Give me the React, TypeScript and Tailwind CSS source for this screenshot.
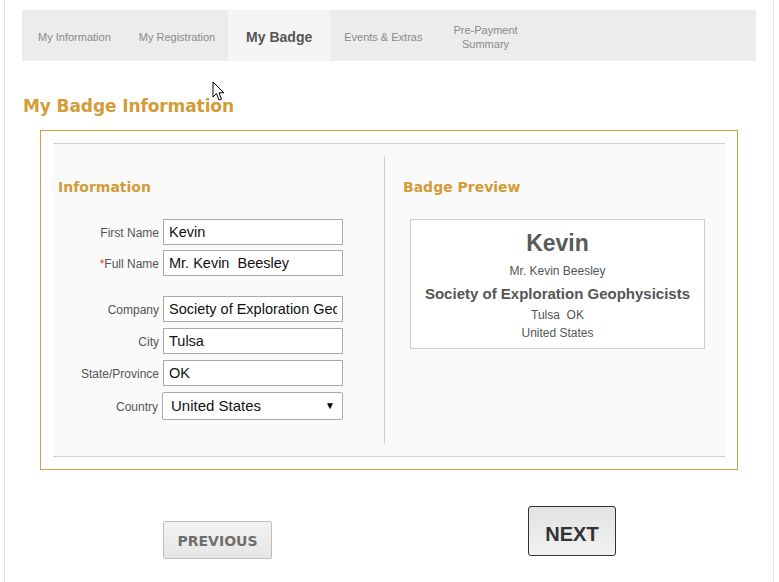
import React from "react";

const arial = { fontFamily: '"Liberation Sans", Arial, sans-serif' };

function Field({ label, value, required }: { label: string; value: string; required?: boolean }) {
  return (
    <div className="flex items-center">
      <label className="w-[110px] pr-[4px] pt-[2px] text-right text-[12px] text-[#555]">
        {required && <span className="text-[#e0413c]">*</span>}
        {label}
      </label>
      <input
        readOnly
        value={value}
        className="h-[26px] w-[180px] border border-[#aaa] bg-white px-[5px] text-[14.5px] text-[#111] outline-none"
      />
    </div>
  );
}

export default function App() {
  return (
    <div className="min-h-[582px] bg-white" style={arial}>
      <div className="relative ml-[4px] min-h-[582px] w-[770px] border-x border-[#e4e4e4] px-[17px] pt-[10px]">
        {/* Tabs */}
        <div className="flex h-[51px] w-[734px] items-stretch bg-[#ececec] pt-[3px] text-[11px] text-[#8a8a8a]">
          <div className="flex items-center pl-[16px] pr-[13px]">My Information</div>
          <div className="flex items-center pl-[15px] pr-[13px]">My Registration</div>
          <div className="-mt-[3px] flex w-[102px] items-center justify-center bg-[#f5f5f5] pt-[3px] text-[14px] font-bold text-[#555]">
            My Badge
          </div>
          <div className="flex items-center pl-[14px] pr-[16px]">Events &amp; Extras</div>
          <div className="flex items-center px-[15px] text-center leading-[14px]">
            Pre-Payment
            <br />
            Summary
          </div>
        </div>

        {/* Cursor */}
        <svg className="absolute left-[207px] top-[81px]" width="13" height="21" viewBox="0 0 13 21">
          <path d="M1 1 L1 16 L4.5 12.5 L7 19 L9.5 18 L7 11.8 L11.8 11.8 Z" fill="#fff" stroke="#000" strokeWidth="1" strokeLinejoin="miter" />
        </svg>

        <h1
          className="mt-[35px] pl-[1px] text-[17px] font-bold leading-[20px] tracking-[-0.1px] text-[#d29c37]"
          style={{ fontFamily: '"DejaVu Sans", Verdana, sans-serif' }}
        >
          My Badge Information
        </h1>

        {/* Gold box */}
        <div className="ml-[18px] mt-[14px] w-[698px] border border-[#d4a03c] bg-white px-[12px] py-[12px]">
          <div className="flex h-[314px] border-y border-[#cfcfcf] bg-[#fafafa]">
            {/* Left column */}
            <div className="my-[12px] w-[332px] border-r border-[#cfcfcf]">
              <h2
                className="ml-[5px] mt-[22px] text-[14px] font-bold leading-[18px] text-[#d29c37]"
                style={{ fontFamily: '"DejaVu Sans", Verdana, sans-serif' }}
              >
                Information
              </h2>
              <div className="mt-[23px] flex flex-col">
                <Field label="First Name" value="Kevin" />
                <div className="mt-[5px]">
                  <Field label="Full Name" value="Mr. Kevin  Beesley" required />
                </div>
                <div className="mt-[20px] flex flex-col gap-[6px]">
                  <Field label="Company" value="Society of Exploration Geophysicists" />
                  <Field label="City" value="Tulsa" />
                  <Field label="State/Province" value="OK" />
                  <div className="flex items-center">
                    <label className="w-[109px] pr-[4px] pt-[2px] text-right text-[12px] text-[#555]">Country</label>
                    <div className="relative">
                      <select
                        className="h-[28px] w-[181px] appearance-none rounded-[2px] border border-[#aaa] bg-white pl-[8px] text-[15px] text-[#111] outline-none"
                        defaultValue="United States"
                        style={arial}
                      >
                        <option>United States</option>
                      </select>
                      <span className="pointer-events-none absolute right-[8px] top-[6px] text-[10px] text-black">▼</span>
                    </div>
                  </div>
                </div>
              </div>
            </div>

            {/* Right column */}
            <div className="flex-1 pl-[18px] pt-[12px]">
              <h2
                className="mt-[22px] text-[14px] font-bold leading-[18px] text-[#d29c37]"
                style={{ fontFamily: '"DejaVu Sans", Verdana, sans-serif' }}
              >
                Badge Preview
              </h2>
              <div className="ml-[7px] mt-[23px] flex h-[130px] w-[295px] flex-col items-center border border-[#cfcfcf] bg-white pt-[9px] text-[#555]">
                <div className="text-[23px] font-bold leading-[28px] text-[#5a5a5a]">Kevin</div>
                <div className="mt-[7px] text-[12px] leading-[14px]">Mr. Kevin Beesley</div>
                <div className="mt-[7px] text-[15px] font-bold leading-[18px]">Society of Exploration Geophysicists</div>
                <div className="mt-[5px] whitespace-pre text-[12px] leading-[14px]">Tulsa  OK</div>
                <div className="mt-[4px] text-[12px] leading-[14px]">United States</div>
              </div>
            </div>
          </div>
        </div>

        {/* Buttons */}
        <div className="grid w-[734px] grid-cols-2">
          <div>
            <button
              className="ml-[141px] mt-[51px] h-[38px] w-[109px] rounded-[2px] border border-[#bdbdbd] bg-gradient-to-b from-[#f2f2f2] to-[#e6e6e6] pt-[3px] text-[14px] font-bold text-[#6e6e6e]"
              style={{ fontFamily: '"DejaVu Sans", Verdana, sans-serif' }}
            >
              PREVIOUS
            </button>
          </div>
          <div className="flex justify-center">
            <button className="ml-[-1px] mt-[36px] h-[50px] w-[88px] rounded-[3px] border border-[#333] bg-gradient-to-b from-[#e2e2e2] to-[#f2f2f2] pt-[5px] text-[20px] font-bold text-[#333]">
              NEXT
            </button>
          </div>
        </div>
      </div>
    </div>
  );
}
